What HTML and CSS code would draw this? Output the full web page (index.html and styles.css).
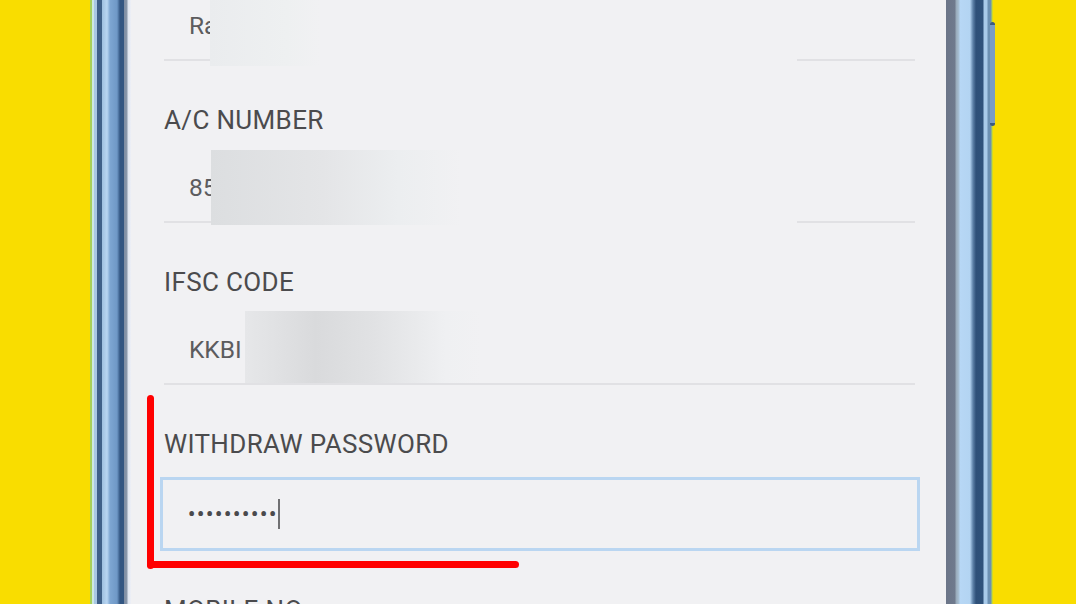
FILE: index.html
```html
<!DOCTYPE html>
<html lang="en">
<head>
<meta charset="utf-8">
<title>Bank details</title>
<link rel="stylesheet" href="styles.css">
</head>
<body>
<div class="stage">
  <div class="phone">
    <div class="frame frame-left"></div>
    <div class="screen">
      <div class="form">
        <div class="field first">
          <div class="value">Ra</div>
          <div class="underline"></div>
        </div>
        <div class="field">
          <div class="label">A/C NUMBER</div>
          <div class="value">85</div>
          <div class="underline"></div>
        </div>
        <div class="field">
          <div class="label">IFSC CODE</div>
          <div class="value">KKBI</div>
          <div class="underline"></div>
        </div>
        <div class="field">
          <div class="label">WITHDRAW PASSWORD</div>
          <div class="input-box"><span class="dots">••••••••••</span><span class="caret"></span></div>
        </div>
        <div class="field">
          <div class="label">MOBILE NO</div>
        </div>
      </div>
      <div class="blur blur-1"></div>
      <div class="blur blur-1b"></div>
      <div class="blur blur-2"></div>
      <div class="blur blur-2b"></div>
      <div class="blur blur-3"></div>
      <div class="mark mark-v"></div>
      <div class="mark mark-h"></div>
    </div>
    <div class="frame frame-right"><div class="side-button"></div></div>
  </div>
</div>
</body>
</html>
```

FILE: styles.css
```css
html, body {
  margin: 0;
  padding: 0;
}
body {
  background: #f9dd00;
  width: 1076px;
  height: 604px;
  overflow: hidden;
  font-family: Roboto, "Liberation Sans", Arial, sans-serif;
}
.stage {
  display: flex;
  height: 604px;
  padding-left: 90px;
}
.phone {
  display: flex;
  height: 604px;
}
.frame-left {
  width: 41px;
  background: linear-gradient(to right,
    #a8d05a 0px, #a8d05a 2px,
    #cde8e2 2px, #cde8e2 4px,
    #a9c7e4 4px, #a9c7e4 7px,
    #3f6089 7px, #3f6089 12px,
    #9ebfdf 12px, #b9d6f2 17px,
    #7ea6d2 20px, #6f98c6 27px,
    #335682 30px, #335682 34px,
    #7d8ca3 34px, #8a98ab 37px,
    #dfe6f2 38px, #eef0f6 41px);
}
.frame-right {
  position: relative;
  width: 47px;
  background: linear-gradient(to right,
    #6b7588 0px, #6f7a8d 9px,
    #98a9b8 10px, #a8c1d6 13px,
    #b7d7f5 14px, #b3d4f2 24px,
    #5d81a8 27px, #2e5079 30px, #2f527b 37px,
    #a8cae9 38px, #a8cae9 41px,
    #6c90b2 42px, #6c90b2 45px,
    #b9d84a 46px, #d9dc10 47px);
}
.side-button {
  position: absolute;
  left: 44px;
  top: 22px;
  width: 5px;
  height: 98px;
  border-radius: 3px;
  background: #7a9cc4;
  border-top: 3px solid #3c5a80;
  border-bottom: 3px solid #3c5a80;
}
.screen {
  position: relative;
  width: 815px;
  height: 604px;
  background: #f1f1f3;
  overflow: hidden;
}
.form {
  display: flex;
  flex-direction: column;
  padding: 0 31px 0 33px;
}
.field {
  display: flex;
  flex-direction: column;
  padding-top: 44px;
}
.field.first {
  padding-top: 11px;
}
.label {
  font-size: 26px;
  line-height: 30px;
  color: #4b4b4d;
  letter-spacing: 0.35px;
}
.value {
  margin-top: 38px;
  padding-left: 25px;
  font-size: 24.5px;
  line-height: 30px;
  color: #5c5c5e;
}
.field.first .value {
  margin-top: 0;
}
.underline {
  margin-top: 18px;
  height: 2px;
  background: #e1e1e4;
}
.input-box {
  margin: 18px -5px 0 -4px;
  height: 68px;
  border: 3px solid #bad6f1;
  display: flex;
  align-items: center;
  padding-left: 25px;
  background: #f1f1f3;
}
.dots {
  font-size: 20px;
  letter-spacing: 1.8px;
  color: #4a4a4c;
  line-height: 20px;
  font-weight: 700;
}
.caret {
  width: 2px;
  height: 30px;
  margin-left: 0;
  background: #707072;
}
.blur {
  position: absolute;
}
.blur-1 {
  left: 79px;
  top: 0;
  width: 110px;
  height: 66px;
  background: linear-gradient(to right, #eaecee, #eef0f1 70%, #f1f1f3);
}
.blur-1b {
  left: 189px;
  top: 50px;
  width: 477px;
  height: 20px;
  background: #f1f1f3;
}
.blur-2 {
  left: 80px;
  top: 150px;
  width: 250px;
  height: 75px;
  background: linear-gradient(to right, #dcdee0, #e4e5e7 45%, #eceef0 75%, #f1f1f3);
}
.blur-2b {
  left: 330px;
  top: 212px;
  width: 336px;
  height: 16px;
  background: #f1f1f3;
}
.blur-3 {
  left: 114px;
  top: 311px;
  width: 236px;
  height: 72px;
  background: linear-gradient(to right, #e6e7e9, #d9dadc 30%, #e1e2e4 55%, #eff0f2 85%, #f1f1f3);
}
.mark {
  position: absolute;
  background: #ff0000;
  border-radius: 4px;
}
.mark-v {
  left: 16px;
  top: 395px;
  width: 7px;
  height: 174px;
}
.mark-h {
  left: 16px;
  top: 561px;
  width: 372px;
  height: 7px;
}
```
